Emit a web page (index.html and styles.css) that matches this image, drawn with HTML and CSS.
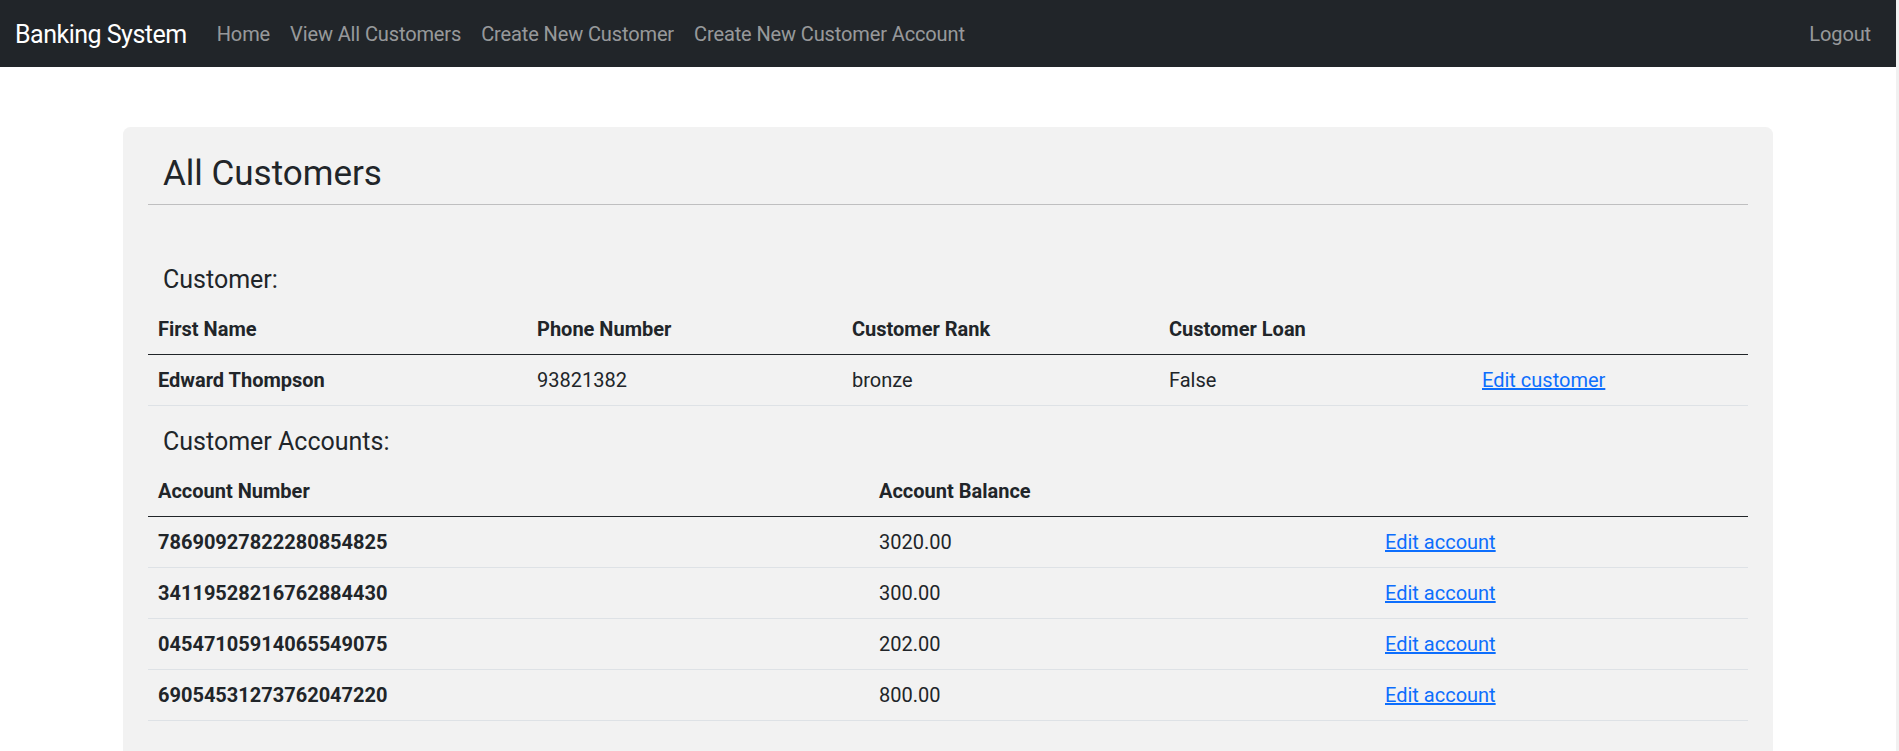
FILE: index.html
```html
<!DOCTYPE html>
<html lang="en">
<head>
<meta charset="utf-8">
<title>All Customers - Banking System</title>
<link rel="stylesheet" href="styles.css">
</head>
<body>
<nav class="navbar">
  <div class="nav-left">
    <a class="brand" href="#">Banking System</a>
    <ul class="nav-links">
      <li><a class="nav-link" href="#">Home</a></li>
      <li><a class="nav-link" href="#">View All Customers</a></li>
      <li><a class="nav-link" href="#">Create New Customer</a></li>
      <li><a class="nav-link" href="#">Create New Customer Account</a></li>
    </ul>
  </div>
  <a class="nav-link" href="#">Logout</a>
</nav>
<main class="container">
  <div class="card">
    <div class="title-bar"><h3 class="page-title">All Customers</h3></div>
    <h5 class="section-title first">Customer:</h5>
    <table class="table">
      <colgroup>
        <col class="c-name"><col class="c-phone"><col class="c-rank"><col class="c-loan"><col class="c-act">
      </colgroup>
      <thead>
        <tr><th>First Name</th><th>Phone Number</th><th>Customer Rank</th><th>Customer Loan</th><th></th></tr>
      </thead>
      <tbody>
        <tr><th>Edward Thompson</th><td>93821382</td><td>bronze</td><td>False</td><td><a class="link" href="#">Edit customer</a></td></tr>
      </tbody>
    </table>
    <h5 class="section-title">Customer Accounts:</h5>
    <table class="table last">
      <colgroup>
        <col class="a-num"><col class="a-bal"><col class="a-act">
      </colgroup>
      <thead>
        <tr><th>Account Number</th><th>Account Balance</th><th></th></tr>
      </thead>
      <tbody>
        <tr><th>78690927822280854825</th><td>3020.00</td><td><a class="link" href="#">Edit account</a></td></tr>
        <tr><th>34119528216762884430</th><td>300.00</td><td><a class="link" href="#">Edit account</a></td></tr>
        <tr><th>04547105914065549075</th><td>202.00</td><td><a class="link" href="#">Edit account</a></td></tr>
        <tr><th>69054531273762047220</th><td>800.00</td><td><a class="link" href="#">Edit account</a></td></tr>
      </tbody>
    </table>
  </div>
</main>
</body>
</html>
```
FILE: styles.css
```css
html {
  background: #f1f1f1;
  overflow: hidden;
}
body {
  margin: 0 3px 0 0;
  background: #ffffff;
  font-family: Roboto, "Liberation Sans", sans-serif;
  font-size: 20px;
  line-height: 1.5;
  color: #212529;
  min-height: 751px;
}
.navbar {
  display: flex;
  justify-content: space-between;
  align-items: center;
  height: 67px;
  padding: 0 15px;
  background: #212529;
  box-sizing: border-box;
}
.nav-left {
  display: flex;
  align-items: center;
}
.brand {
  color: #ffffff;
  text-decoration: none;
  font-size: 25px;
  line-height: 37px;
  padding-top: 2px;
  margin-right: 20px;
  letter-spacing: -0.5px;
}
.nav-links {
  display: flex;
  list-style: none;
  margin: 0;
  padding: 0;
}
.nav-link {
  display: block;
  padding: 0 10px;
  line-height: 30px;
  color: rgba(255, 255, 255, 0.55);
  text-decoration: none;
  letter-spacing: -0.12px;
}
.container {
  width: 1650px;
  margin: 60px auto 0;
}
.card {
  background: #f2f2f2;
  border-radius: 7.5px;
  padding: 26px 25px 40px;
}
.title-bar {
  border-bottom: 1px solid #bfbfc0;
  padding-bottom: 9px;
}
.page-title {
  margin: 0;
  padding-left: 15px;
  font-size: 35px;
  line-height: 42px;
  font-weight: 400;
}
.section-title {
  margin: 0 0 9px;
  padding-left: 15px;
  font-size: 25px;
  line-height: 30px;
  font-weight: 400;
}
.section-title.first {
  margin-top: 59.5px;
}
.table {
  width: 100%;
  border-collapse: collapse;
  table-layout: fixed;
  margin-bottom: 21px;
}
.table.last {
  margin-bottom: 0;
}
.table th,
.table td {
  padding: 10px;
  line-height: 30px;
  text-align: left;
  vertical-align: top;
  border-bottom: 1px solid #dee2e6;
  white-space: nowrap;
}
.table th {
  font-weight: 700;
}
.table thead th {
  border-bottom: 1px solid #212529;
}
.link {
  color: #0d6efd;
  text-decoration: underline;
}
.c-name { width: 379px; }
.c-phone { width: 315px; }
.c-rank { width: 317px; }
.c-loan { width: 313px; }
.c-act { width: 276px; }
.a-num { width: 721px; }
.a-bal { width: 506px; }
.a-act { width: 373px; }
```
